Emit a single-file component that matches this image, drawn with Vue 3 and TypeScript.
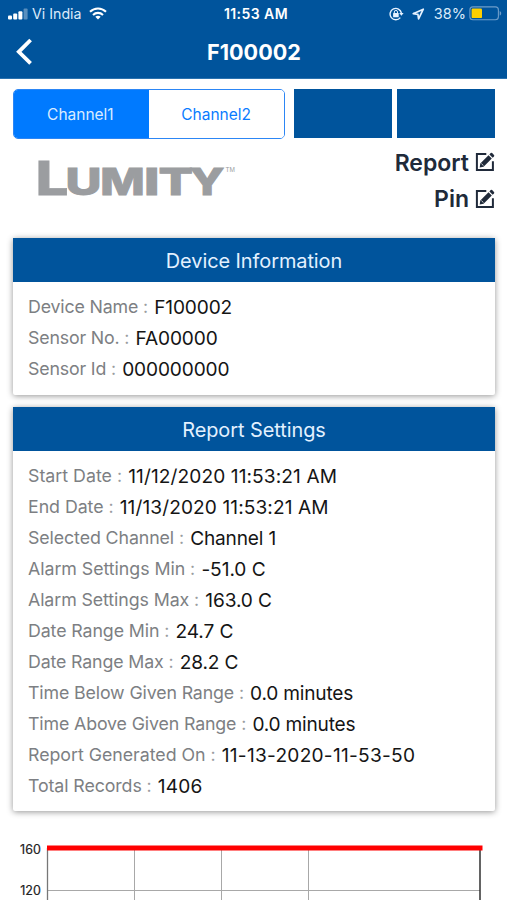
<script setup lang="ts">
interface Row {
  label: string
  value: string
  labelTracking?: number
  tracking?: number
}

interface Card {
  title: string
  rows: Row[]
}

const cards: Card[] = [
  {
    title: 'Device Information',
    rows: [
      { label: 'Device Name', value: 'F100002', labelTracking: -0.17 },
      { label: 'Sensor No.', value: 'FA00000', labelTracking: -0.17 },
      { label: 'Sensor Id', value: '000000000', labelTracking: -0.17 },
    ],
  },
  {
    title: 'Report Settings',
    rows: [
      { label: 'Start Date', value: '11/12/2020 11:53:21 AM', labelTracking: 0, tracking: 0.1 },
      { label: 'End Date', value: '11/13/2020 11:53:21 AM', labelTracking: -0.05, tracking: 0.1 },
      { label: 'Selected Channel', value: 'Channel 1', tracking: -0.18 },
      { label: 'Alarm Settings Min', value: '-51.0 C', labelTracking: -0.05, tracking: -0.05 },
      { label: 'Alarm Settings Max', value: '163.0 C' },
      { label: 'Date Range Min', value: '24.7 C' },
      { label: 'Date Range Max', value: '28.2 C', labelTracking: -0.15 },
      { label: 'Time Below Given Range', value: '0.0 minutes', labelTracking: -0.14, tracking: -0.2 },
      { label: 'Time Above Given Range', value: '0.0 minutes', labelTracking: -0.14, tracking: -0.2 },
      { label: 'Report Generated On', value: '11-13-2020-11-53-50', labelTracking: -0.03, tracking: 0.27 },
      { label: 'Total Records', value: '1406', tracking: 0.15 },
    ],
  },
]

const actions: string[] = ['Report', 'Pin']

const spacing = (px: number) => ({ letterSpacing: `${px}px` })
</script>

<template>
  <div class="screen">
    <header class="top">
      <div class="status">
        <div class="side">
          <svg class="signal" width="20" height="12" viewBox="0 0 20 12" fill="#fff">
            <rect x="0" y="7.5" width="4" height="4" rx="1" />
            <rect x="5.2" y="5.5" width="4" height="6" rx="1" />
            <rect x="10.4" y="3.2" width="4" height="8.3" rx="1" />
            <rect x="15.6" y="0.5" width="4" height="11" rx="1" opacity=".35" />
          </svg>
          <span class="carrier">Vi India</span>
          <svg class="wifi" width="18" height="13" viewBox="0 0 18 13" fill="none" stroke="#fff" stroke-width="2.1">
            <path d="M1 4.7C5.6.4 12.4.4 17 4.7M4 7.9c2.9-2.7 7.1-2.7 10 0" />
            <path d="M9 12.4 6.3 9.7c1.5-1.4 3.9-1.4 5.4 0z" fill="#fff" stroke="none" />
          </svg>
        </div>
        <span class="clock">11:53 AM</span>
        <div class="side right">
          <svg width="15" height="14" viewBox="0 0 15 14" fill="none" stroke="#e6f2ff" stroke-width="1.4">
            <path d="M11.3 10.6A5.7 5.7 0 1 1 12.4 6" />
            <path d="M10.2 6h4.4l-2.2 2.8z" fill="#e6f2ff" stroke="none" />
            <rect x="4.1" y="5.9" width="5.6" height="4.4" rx=".5" fill="#e6f2ff" stroke="none" />
            <path d="M5.3 6.3V5a1.6 1.6 0 0 1 3.2 0v1.3" stroke-width="1" />
          </svg>
          <svg class="arrow" width="13" height="12" viewBox="0 0 13 12">
            <path d="M11.3 1.2 1.2 5.7l4.7.6.7 4.6z" fill="none" stroke="#e6f2ff" stroke-width="1.7" stroke-linejoin="round" />
          </svg>
          <span class="percent">38%</span>
          <svg class="battery" width="33" height="15" viewBox="0 0 33 15">
            <rect x=".9" y=".9" width="28.5" height="12.8" rx="3" fill="none" stroke="#6e9dca" stroke-width="1.1" />
            <rect x="2.6" y="2.5" width="10.4" height="9.6" rx="1.2" fill="#ffcf00" />
            <path d="M30.7 5v4.6c2-.8 2-3.8 0-4.6z" fill="#6e9dca" />
          </svg>
        </div>
      </div>
      <div class="nav">
        <svg class="back" width="18" height="28" viewBox="0 0 18 28">
          <path d="M14.6 2 2.8 13.8l11.8 11.6" fill="none" stroke="#fff" stroke-width="3.8" />
        </svg>
        <h1>F100002</h1>
      </div>
    </header>

    <div class="controls">
      <div class="tabs">
        <button class="tab active">Channel1</button>
        <button class="tab">Channel2</button>
      </div>
      <div class="block"></div>
      <div class="block"></div>
    </div>

    <div class="brand">
      <svg class="logo" width="206" height="44" viewBox="0 0 206 44" fill="#9b9da0">
        <g class="logo-text">
          <text x="-2.3" y="37.3" font-size="47" textLength="32.5" lengthAdjust="spacingAndGlyphs">L</text>
          <text x="27.6" y="37.3" font-size="36.8" textLength="36" lengthAdjust="spacingAndGlyphs">U</text>
          <text x="62.3" y="37.3" font-size="36.8" textLength="44.5" lengthAdjust="spacingAndGlyphs">M</text>
          <text x="106" y="37.3" font-size="36.8" textLength="15.5" lengthAdjust="spacingAndGlyphs">I</text>
          <text x="120.5" y="37.3" font-size="36.8" textLength="34.5" lengthAdjust="spacingAndGlyphs">T</text>
          <text x="151.5" y="37.3" font-size="36.8" textLength="35" lengthAdjust="spacingAndGlyphs">Y</text>
        </g>
        <text x="187.5" y="13.8" class="tm">TM</text>
      </svg>
      <div class="actions">
        <div v-for="name in actions" :key="name" class="action">
          <span>{{ name }}</span>
          <svg width="20" height="20" viewBox="0 0 20 20">
            <path d="M11.3 1.9H1.9v16.2h16V9.2" fill="none" stroke="#202a3a" stroke-width="2" />
            <path d="m4.7 15.4.6-3.9 8.2-8.2 3.3 3.3-8.2 8.2zM14.4 2.4l1.3-1.3q.7-.6 1.4 0l1.9 1.9q.6.7 0 1.4l-1.3 1.3z" fill="#202a3a" />
            <path d="m6.4 11.6 2.1 2.1" stroke="#fff" stroke-width=".8" />
          </svg>
        </div>
      </div>
    </div>

    <section v-for="card in cards" :key="card.title" class="card">
      <h2>{{ card.title }}</h2>
      <div class="rows">
        <div v-for="row in card.rows" :key="row.label" class="row">
          <span class="label" :style="spacing(row.labelTracking ?? -0.1)">{{ row.label }}<span class="colon"> :</span></span>
          <span class="value" :style="spacing(row.tracking ?? -0.12)">{{ row.value }}</span>
        </div>
      </div>
    </section>

    <svg class="chart" width="507" height="60" viewBox="0 0 507 60">
      <g stroke="#a8a8a8" stroke-width="1">
        <path d="M134.5 10v50M221.5 10v50M308.5 10v50M47 50.5h433" />
      </g>
      <path d="M47.5 8v52" stroke="#777" stroke-width="1.3" />
      <path d="M480 8v52" stroke="#222" stroke-width="1.4" />
      <path d="M47 8h435.5" stroke="#f00" stroke-width="5" />
      <g class="axis">
        <text x="40.8" y="14.3">160</text>
        <text x="40.8" y="54.5">120</text>
      </g>
    </svg>
  </div>
</template>

<style>
body {
  margin: 0;
  background: #fff;
}
</style>

<style scoped>
.screen {
  width: 507px;
  height: 900px;
  overflow: hidden;
  background: #fff;
  font-family: Inter, "Liberation Sans", sans-serif;
  color: #111;
}
.top {
  box-sizing: border-box;
  height: 79px;
  background: #00549c;
  border-bottom: 1px solid #2a72b0;
  color: #fff;
}
.status {
  display: grid;
  grid-template-columns: 1fr auto 1fr;
  align-items: center;
  height: 27px;
  padding: 0 6px 0 8px;
}
.side {
  display: flex;
  align-items: center;
  color: #dcebfa;
}
.right {
  justify-content: flex-end;
}
.carrier {
  margin-left: 4px;
  font-size: 14.2px;
}
.wifi {
  margin-left: 7px;
}
.clock {
  padding-left: 3px;
  font-size: 14px;
  font-weight: 600;
  letter-spacing: 0.45px;
}
.arrow {
  margin-left: 8px;
  margin-right: 1px;
}
.percent {
  margin-left: 8px;
  font-size: 14.5px;
}
.battery {
  margin-left: 3px;
  margin-right: -1px;
}
.nav {
  display: grid;
  grid-template-columns: 40px 1fr 40px;
  align-items: center;
  height: 50px;
}
.back {
  margin-left: 16px;
}
h1 {
  margin: 0;
  padding-left: 1px;
  text-align: center;
  font-size: 21.6px;
  font-weight: 700;
}
.controls {
  display: flex;
  gap: 5px;
  padding: 10px 12px 0 13px;
}
.tabs {
  box-sizing: border-box;
  display: grid;
  grid-template-columns: 1fr 1fr;
  width: 271.5px;
  height: 50px;
  margin-right: 4.5px;
  border: 1px solid #2c86f5;
  border-radius: 5px;
  overflow: hidden;
}
.tab {
  padding: 0;
  border: 0;
  background: #fff;
  color: #0a7bff;
  font-family: inherit;
  font-size: 15.5px;
}
.tab.active {
  padding-right: 2px;
  background: #007aff;
  color: #d9ecff;
}
.block {
  flex: 1;
  height: 49px;
  background: #00549c;
}
.brand {
  display: flex;
  justify-content: space-between;
  height: 99px;
  padding: 0 12px 0 38px;
}
.logo {
  margin-top: 19px;
  overflow: visible;
}
.logo-text {
  font-weight: 800;
  stroke: #9b9da0;
  stroke-width: 0.9;
}
.tm {
  font-family: "Liberation Sans", sans-serif;
  font-size: 6.5px;
}
.actions {
  padding-top: 5px;
}
.action {
  display: flex;
  align-items: center;
  justify-content: flex-end;
  gap: 6px;
  height: 36.5px;
  color: #202a3a;
  font-size: 23px;
  font-weight: 600;
}
.action span {
  padding-top: 1px;
}
.card {
  margin: 0 12px 12px 13px;
  padding-bottom: 11px;
  border-radius: 2px;
  background: #fff;
  box-shadow: 0 1px 6px rgba(0, 0, 0, 0.42);
}
.card:last-of-type {
  padding-bottom: 10px;
}
h2 {
  margin: 0 0 9px;
  height: 44px;
  background: #00549c;
  color: #e3f1ff;
  font-size: 19.9px;
  font-weight: 400;
  letter-spacing: -0.05px;
  line-height: 46px;
  text-align: center;
}
.row {
  display: flex;
  gap: 6.2px;
  height: 31px;
  padding-left: 15px;
  white-space: nowrap;
}
.label {
  color: #7d7f83;
  font-size: 17.8px;
  line-height: 31px;
}
.colon {
  color: #9a9ca0;
}
.value {
  color: #151515;
  font-size: 19.1px;
  line-height: 32px;
}
.chart {
  display: block;
  margin-top: 29px;
}
.axis {
  fill: #222;
  stroke: #222;
  stroke-width: 0.2;
  font-size: 12.5px;
  text-anchor: end;
}
</style>
